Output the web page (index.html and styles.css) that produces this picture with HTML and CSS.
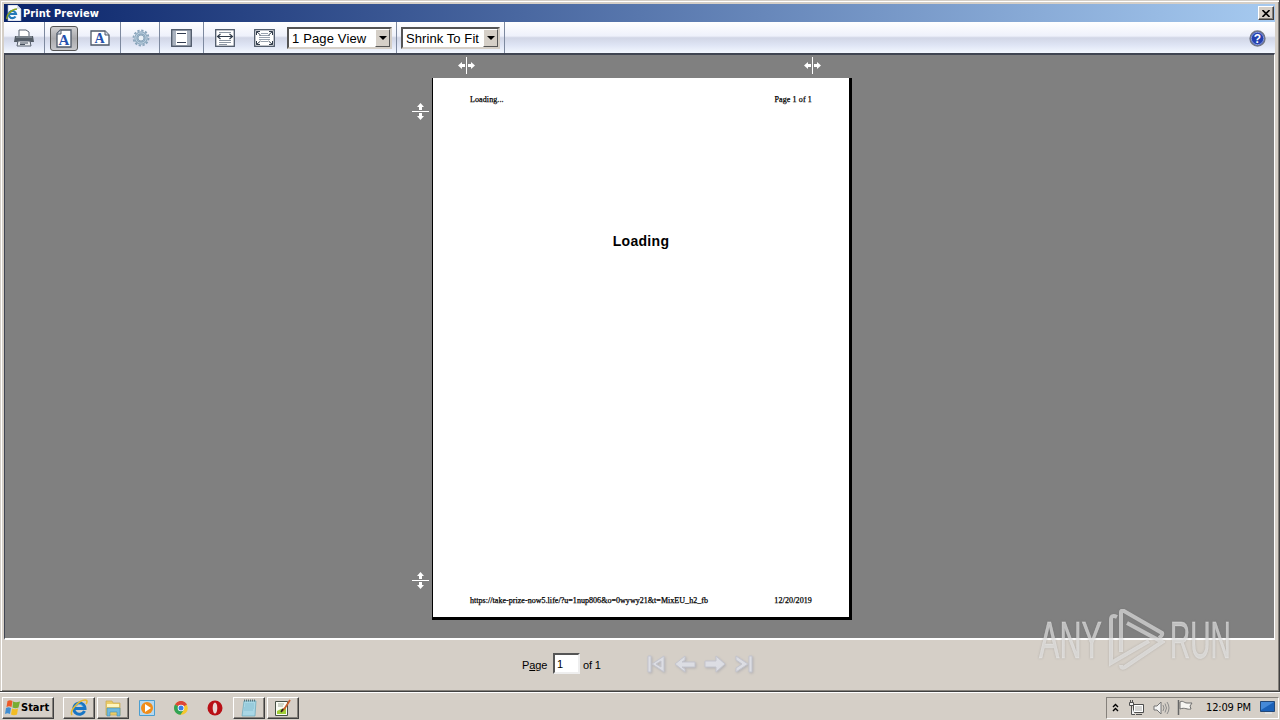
FILE: index.html
```html
<!DOCTYPE html>
<html lang="en">
<head>
  <meta charset="UTF-8">
  <title>Print Preview</title>
  <link rel="stylesheet" href="styles.css">
</head>
<body>
  <div class="window">
    <header class="titlebar">
      <svg class="title-icon" width="16" height="16" viewBox="0 0 16 16">
        <path d="M2 0h9l4 4v12H2z" fill="#f8faff" stroke="#a9b4c4" stroke-width=".6"/>
        <path d="M11 0v4h4" fill="#d5deea"/>
        <path d="M9.500 11.500A3.600 3.600 0 1 1 10 9H3.500" fill="none" stroke="#2579b9" stroke-width="2.200"/>
        <path d="M1 14C0 10 6 4 11 4" fill="none" stroke="#8ba51f" stroke-width="1.500"/>
      </svg>
      <h1>Print Preview</h1>
      <button class="close">
        <svg width="8" height="7" viewBox="0 0 8 7"><path d="M.5 0l7 7M7.500 0l-7 7" stroke="#000" stroke-width="1.600"/></svg>
      </button>
    </header>

    <nav class="toolbar">
      <div class="group print">
        <svg width="20" height="18" viewBox="0 0 20 18">
          <path d="M5 7V1h7l3 2v4" fill="#fff" stroke="#596270"/>
          <path d="M1 7h18l1 6h-3v2H3v-2H0z" fill="#535c66"/>
          <path d="M2 8h16" stroke="#a3abb3"/>
          <path d="M4 12h12l1 5H3z" fill="#e8ebef" stroke="#596270"/>
          <path d="M6 14h8M6 15.500h5" stroke="#46515e"/>
        </svg>
      </div>
      <div class="group orient">
        <div class="tool active">
          <svg width="16" height="20" viewBox="0 0 16 20">
            <path d="M4.500 1H15v17H1V4.500z" fill="#fff" stroke="#4d5868" stroke-width="1.300"/>
            <path d="M5 1v4H1" fill="#d8dde8" stroke="#4d5868"/>
            <text x="8" y="15.500" class="letter">A</text>
          </svg>
        </div>
        <svg width="20" height="16" viewBox="0 0 20 16">
          <path d="M1 1h14l4 4v10H1z" fill="#fff" stroke="#4d5868" stroke-width="1.300"/>
          <path d="M15 1v4h4" fill="#d8dde8" stroke="#4d5868"/>
          <text x="9.500" y="12.500" class="letter small">A</text>
        </svg>
      </div>
      <div class="group setup">
        <svg width="18" height="18" viewBox="0 0 18 18">
          <circle cx="9" cy="9" r="7.500" fill="none" stroke="#8aa5bb" stroke-width="1.800" stroke-dasharray="2.300 1.627"/>
          <circle cx="9" cy="9" r="5" fill="#dbe5ee" stroke="#8fabc1" stroke-width="3.400"/>
          <circle cx="9" cy="9" r="5.200" fill="none" stroke="#bdd0df" stroke-width="1"/>
          <circle cx="9" cy="9" r="3" fill="#e9f0f6" stroke="#7896ae" stroke-width=".8"/>
        </svg>
      </div>
      <div class="group headers">
        <svg width="21" height="18" viewBox="0 0 21 18">
          <rect x=".7" y=".7" width="19.600" height="16.600" fill="#a9b2bf" stroke="#4d5868" stroke-width="1.300"/>
          <path d="M5 2h11v14H5z" fill="#fff"/>
          <path d="M6 4.500h9M6 13.500h9" stroke="#303b50"/>
        </svg>
      </div>
      <div class="group view">
        <svg width="20" height="18" viewBox="0 0 20 18">
          <rect x=".7" y=".7" width="18.600" height="16.600" fill="#fff" stroke="#4d5868" stroke-width="1.300"/>
          <path d="M4 3.500h12M4 11.500h12M4 13.500h12M4 15.500h8" stroke="#8b95a2"/>
          <path d="M3 7.500h14M5.500 5l-3 2.500 3 2.500M14.500 5l3 2.500-3 2.500" fill="none" stroke="#303b4a" stroke-width="1.100"/>
        </svg>
        <svg width="21" height="18" viewBox="0 0 21 18">
          <rect x=".7" y=".7" width="19.600" height="16.600" fill="#fff" stroke="#4d5868" stroke-width="1.300"/>
          <path d="M7 4.500h7M5 6.500h11M5 8.500h11M5 10.500h11M7 12.500h7" stroke="#98a1ae"/>
          <path d="M2.500 6V2.500H6M15 2.500h3.500V6M2.500 12v3.500H6M15 15.500h3.500V12M2.500 2.500l4 3.500M18.500 2.500l-4 3.500M2.500 15.500l4-3.500M18.500 15.500l-4-3.500" fill="none" stroke="#303b4a"/>
        </svg>
        <div class="select pages"><span>1 Page View</span><i></i></div>
      </div>
      <div class="group scale">
        <div class="select"><span>Shrink To Fit</span><i></i></div>
      </div>
      <svg class="help" width="17" height="17" viewBox="0 0 17 17">
        <circle cx="8.500" cy="8.500" r="7.400" fill="#2440ae" stroke="#737785" stroke-width="1.500"/>
        <circle cx="8.500" cy="8.500" r="6.200" fill="none" stroke="#aabcf0" stroke-width=".7"/>
        <text x="8.500" y="12.600" class="mark">?</text>
      </svg>
    </nav>

    <main class="canvas">
      <svg class="handle left" width="17" height="17" viewBox="0 0 17 17">
        <defs><path id="grip" d="M8 0h1v17H8zM0 8.500L4 5v2h3v3H4v2zM17 8.500L13 5v2h-3v3h3v2z" fill="#fff"/></defs>
        <use href="#grip"/>
      </svg>
      <svg class="handle right" width="17" height="17" viewBox="0 0 17 17"><use href="#grip"/></svg>
      <svg class="handle top" width="17" height="17" viewBox="0 0 17 17"><use href="#grip" transform="rotate(90 8.500 8.500)"/></svg>
      <svg class="handle bottom" width="17" height="17" viewBox="0 0 17 17"><use href="#grip" transform="rotate(90 8.500 8.500)"/></svg>
      <article class="sheet">
        <div class="sheet-row"><span class="doc-title">Loading...</span><span class="doc-page">Page 1 of 1</span></div>
        <h2>Loading</h2>
        <div class="sheet-row"><span class="doc-url">https://take-prize-now5.life/?u=1nup806&amp;o=0wywy21&amp;t=MixEU_h2_fb</span><span class="doc-date">12/20/2019</span></div>
      </article>
    </main>

    <footer class="pager">
      <label>P<u>a</u>ge</label>
      <div class="page-input">1</div>
      <span class="count">of 1</span>
      <div class="arrows">
        <svg width="20" height="20" viewBox="0 0 20 20"><path d="M2 2h3v16H2zM18 2v16L6 10zM15 7l-5 3 5 3z"/></svg>
        <svg width="22" height="20" viewBox="0 0 22 20"><path d="M1 10l10-8v4l-3 2h13v5H8l3 2v3z"/></svg>
        <svg width="22" height="20" viewBox="0 0 22 20"><path d="M21 10l-9-8v5H1v6h11v5z"/></svg>
        <svg width="20" height="20" viewBox="0 0 20 20"><path d="M15 2h3v16h-3zM2 2l12 8-12 8v-4l6-4-6-4z"/></svg>
      </div>
    </footer>
  </div>

  <div class="taskbar">
    <button class="start">
      <svg width="17" height="16" viewBox="0 0 16 16">
        <path d="M3 1c2-1 3-1 5 0L7 7C5 6 4 6 2 7z" fill="#ec5a28"/>
        <path d="M8.500 1.500c2 1 4 1 7 0L14 7.500c-2 1-4 1-6 0z" fill="#78ad32"/>
        <path d="M1.500 8c2-1 3-1 5 0l-1 6c-2-1-3-1-5 0z" fill="#418ed2"/>
        <path d="M7.500 8.500c2 1 4 1 6 0L12.500 14.500c-2 1-4 1-6 0z" fill="#f3bd24"/>
      </svg>
      <span>Start</span>
    </button>
    <div class="task open">
      <svg width="18" height="18" viewBox="0 0 18 18">
        <path d="M14.500 12A5.600 5.600 0 1 1 15 9.500H5" fill="none" stroke="#1976c5" stroke-width="3"/>
        <path d="M5.500 8C6 5 12 4 13 8" fill="none" stroke="#65bcf0"/>
        <path d="M2 16C-1 12 9 1 15 1c3 0 2 3 1 4" fill="none" stroke="#e5b72e" stroke-width="1.500"/>
      </svg>
    </div>
    <div class="task open">
      <svg width="18" height="18" viewBox="0 0 18 18">
        <path d="M2 2h6l1 2h7v12H2z" fill="#ebcc67" stroke="#c8a84e" stroke-width=".7"/>
        <path d="M3 5h12v3H3z" fill="#fff5be"/>
        <path d="M3 9h13v8h-3v-4H6v4H3z" fill="#6fb9df" stroke="#468ead" stroke-width=".6"/>
      </svg>
    </div>
    <div class="task">
      <svg width="16" height="16" viewBox="0 0 16 16">
        <path d="M.5.5h15v15H.5z" fill="#b6d8ef" stroke="#4b9ed0"/>
        <circle cx="8" cy="8" r="6" fill="#f18d19"/>
        <path d="M6 4l6 4-6 4z" fill="#fff"/>
      </svg>
    </div>
    <div class="task">
      <svg width="14" height="14" viewBox="0 0 14 14">
        <circle cx="7" cy="7" r="6.800" fill="#f5c72e"/>
        <path d="M7 7L1 3.500A6.800 6.800 0 0 1 13 3.500z" fill="#dc4638"/>
        <path d="M1 3.500A6.800 6.800 0 0 0 6.500 13.800L10 8.500 7 7z" fill="#31a354"/>
        <circle cx="7" cy="7" r="3.300" fill="#fff"/><circle cx="7" cy="7" r="2.500" fill="#397ee5"/>
      </svg>
    </div>
    <div class="task">
      <svg width="16" height="16" viewBox="0 0 16 16">
        <circle cx="8" cy="8" r="7.500" fill="#b91016"/>
        <ellipse cx="8" cy="8" rx="2.300" ry="5.500" fill="#e9d8d5"/>
      </svg>
    </div>
    <div class="task open">
      <svg width="16" height="18" viewBox="0 0 16 18">
        <path d="M3 2h12l-1 15H1z" fill="#a9d7e5" stroke="#67a6ba" stroke-width=".7"/>
        <path d="M4 5h9M4 7h9M3 9h10M3 11h9" stroke="#79b6ca" stroke-width=".7"/>
        <path d="M3 1.500h12" stroke="#56757e" stroke-width="2" stroke-dasharray="1 1"/>
      </svg>
    </div>
    <div class="task open">
      <svg width="18" height="18" viewBox="0 0 18 18">
        <path d="M1.500 2.500h12v14h-12z" fill="#fafcf4" stroke="#475045"/>
        <path d="M3 12l4-2 5-1v6H3z" fill="#a0cf38"/>
        <path d="M4 5h6M4 7h5" stroke="#a3ad9b"/>
        <path d="M16 1l-5 8-3 3" fill="none" stroke="#c75e2a" stroke-width="1.800"/>
        <path d="M9 10l-2 3" stroke="#222" stroke-width="1.500"/>
      </svg>
    </div>

    <div class="tray">
      <svg width="7" height="9" viewBox="0 0 7 9"><path d="M1 4l2.500-2.500L6 4M1 8l2.500-2.500L6 8" fill="none" stroke="#000" stroke-width="1.400"/></svg>
      <svg class="net" width="17" height="16" viewBox="0 0 17 16">
        <path d="M5.500 4.500h10v8h-10zM8 14.500h6" fill="#d5d5d3" stroke="#4e4e4e"/>
        <path d="M1.500 2.500h4v3h-4zM2.500 0v2M4.500 0v2M3.500 6v8.500H7" fill="#f3f3f3" stroke="#505050"/>
        <path d="M6.500 5.500h8v6h-8z" fill="none" stroke="#fff"/>
      </svg>
      <svg class="sound" width="17" height="14" viewBox="0 0 17 14">
        <path d="M1 5h3l4-4v12L4 9H1z" fill="#f4f4f4" stroke="#747474"/>
        <path d="M10 4q2 3 0 6M12 2.500q3 4.500 0 9M14 1q4 6 0 12" fill="none" stroke="#8c8c8c"/>
      </svg>
      <svg class="flag" width="16" height="15" viewBox="0 0 16 15">
        <path d="M3 2c3-2 4 1 7 1h5l-2 3 1 3c-4 1-6-2-11 0z" fill="#f6f5f2" stroke="#6f6f6f"/>
        <path d="M1.500 0v15" stroke="#676767" stroke-width="1.500"/>
      </svg>
      <time>12:09 PM</time>
      <svg class="desk" width="15" height="13" viewBox="0 0 15 13">
        <path d="M.5.5h14v10H.5z" fill="#1b61b8" stroke="#234878"/>
        <path d="M1 1h13L1 9z" fill="#4589d8"/><path d="M5 12h7" stroke="#e9f1fb"/>
      </svg>
    </div>
  </div>

  <div class="watermark">
    <span class="any">ANY</span>
    <svg width="56" height="62" viewBox="0 0 56 62">
      <path d="M8 8Q2 5 2 11V54L40 32M12 43V3Q12 1 15 2L53 24Q54 26 50 29M18 14L53 33L16 58Q12 60 12 56" fill="none" stroke="currentColor" stroke-width="4"/>
    </svg>
    <span class="run">RUN</span>
  </div>
</body>
</html>
```
FILE: styles.css
```css
* {
  box-sizing: border-box;
}
body {
  margin: 0;
  width: 1280px;
  height: 720px;
  overflow: hidden;
  position: relative;
  background: #d5cfc7;
  color: #000;
  font-family: "DejaVu Sans Condensed", "DejaVu Sans", sans-serif;
  font-size: 11px;
}
svg {
  display: block;
  flex: none;
}
button {
  padding: 0;
  font: inherit;
  background: #d5cfc7;
  border: 1px solid;
  border-color: #fff #404040 #404040 #fff;
  box-shadow: inset -1px -1px #85817b;
}
.window {
  height: 692px;
  padding: 4px 4px 0;
  border-right: 1px solid #404040;
  border-bottom: 1px solid #404040;
  box-shadow: inset 1px 1px #d5cfc7, inset 2px 2px #fff, inset -1px -1px #85817b;
  display: flex;
  flex-direction: column;
}
.titlebar {
  height: 18px;
  display: flex;
  align-items: center;
  padding: 0 1px 0 2px;
  background: linear-gradient(90deg, #0a246a, #a6caf0);
}
.titlebar h1 {
  flex: 1;
  margin: 0 0 0 1px;
  color: #fff;
  font-size: 11px;
  letter-spacing: 0.05px;
}
.close {
  width: 16px;
  height: 14px;
  display: flex;
  align-items: center;
  justify-content: center;
}

/* toolbar */
.toolbar {
  height: 31px;
  display: flex;
  background: linear-gradient(#fff 0, #eef1fb 45%, #d1d6e6 51%, #dfe5f5 75%, #f3f8ff 100%);
}
.group {
  display: flex;
  align-items: center;
  border-right: 1px solid #7d899f;
  padding-top: 1px;
}
.print { width: 41px; padding-left: 10px; }
.orient { width: 76px; padding-left: 5px; gap: 12px; }
.setup { width: 39px; padding-left: 11px; }
.headers { width: 44px; padding-left: 11px; }
.view { width: 193px; padding-left: 11px; }
.scale { width: 108px; padding-left: 4px; }
.view svg + svg { margin-left: 19px; }
.view .select { margin-left: 12px; width: 105px; }
.tool {
  width: 28px;
  height: 25px;
  display: flex;
  align-items: center;
  justify-content: center;
}
.active {
  margin-top: 1px;
  border: 1px solid #555;
  border-radius: 3px;
  background: linear-gradient(#d0d0d2, #a9a9ac 50%, #c6c7cb);
}
.letter {
  font: bold 15px "Liberation Serif", serif;
  fill: #2450ad;
  text-anchor: middle;
}
.small { font-size: 14px; }
.select {
  width: 99px;
  height: 22px;
  display: flex;
  background: #fff;
  border: 2px solid;
  border-color: #555 #d5cfc7 #d5cfc7 #555;
  font: 13px/19px "Liberation Sans", sans-serif;
}
.select span {
  flex: 1;
  padding-left: 3px;
  white-space: nowrap;
  letter-spacing: 0.08px;
}
.select.pages span { letter-spacing: 0.15px; }
.select i {
  width: 15px;
  background: #d5cfc7;
  border: 1px solid;
  border-color: #fff #555 #555 #fff;
  display: flex;
  align-items: center;
  justify-content: center;
}
.select i::after {
  content: "";
  border: 4px solid transparent;
  border-top-color: #000;
  border-bottom: 0;
}
.help { margin: 8px 9px 0 auto; }
.mark {
  font: bold 12px "Liberation Sans", sans-serif;
  fill: #fff;
  text-anchor: middle;
}

/* preview area */
.canvas {
  height: 587px;
  position: relative;
  background: #808080;
  border: 1px solid #404552;
  border-width: 2px 0 0 1px;
  border-right: 1px solid #fff;
  border-bottom: 2px solid #fff;
  padding: 23px 0 0 427px;
}
.handle { position: absolute; }
.handle.left { left: 453px; top: 2px; }
.handle.right { left: 799px; top: 2px; }
.handle.top { left: 407px; top: 48px; }
.handle.bottom { left: 407px; top: 517px; }
.sheet {
  width: 420px;
  height: 542px;
  background: #fff;
  border: solid #000;
  border-width: 0 3px 3px 1px;
  padding: 16px 37px 11px;
  display: flex;
  flex-direction: column;
}
.sheet-row {
  display: flex;
  justify-content: space-between;
  font: 8px/11px "Liberation Serif", serif;
  white-space: nowrap;
  -webkit-text-stroke: 0.25px #000;
}
.doc-title { letter-spacing: 0.1px; }
.doc-page { letter-spacing: 0.12px; }
.doc-url { letter-spacing: 0.04px; }
.doc-date { letter-spacing: 0.12px; }
.sheet h2 {
  flex: 1;
  margin: 128px 0 0;
  text-align: center;
  font: bold 14px/16px "Liberation Sans", sans-serif;
  letter-spacing: 0.3px;
}

/* page navigation */
.pager {
  flex: 1;
  display: flex;
  align-items: center;
  padding: 0 0 4px 518px;
  font: 11px "Liberation Sans", sans-serif;
}
.pager label { width: 31px; padding-top: 3px; letter-spacing: -0.1px; }
.page-input {
  width: 27px;
  height: 21px;
  padding: 3px 2px;
  background: #fff;
  border: 2px solid;
  border-color: #555 #eee #eee #555;
}
.count { width: 66px; padding: 3px 0 0 3px; letter-spacing: -0.2px; }
.arrows {
  display: flex;
  gap: 8px;
  fill: #dcdde3;
  stroke: #c3c4cd;
  stroke-width: 1;
  filter: drop-shadow(1px 1px 1px #b5b3b5);
}

/* taskbar */
.taskbar {
  height: 28px;
  display: flex;
  align-items: center;
  padding: 2px 1px 0 2px;
  border-top: 1px solid #fff;
}
.start {
  width: 52px;
  height: 22px;
  margin-right: 9px;
  display: flex;
  align-items: center;
  font-weight: bold;
  font-size: 11px;
  padding-left: 1px;
}
.task {
  width: 32px;
  height: 22px;
  margin-right: 2px;
  display: flex;
  align-items: center;
  justify-content: center;
}
.open {
  border: 1px solid;
  border-color: #fff #404040 #404040 #fff;
  box-shadow: inset -1px -1px #85817b;
}
.tray {
  width: 173px;
  height: 22px;
  margin-left: auto;
  padding-left: 5px;
  display: flex;
  align-items: center;
  border: 1px solid;
  border-color: #85817b #fff #fff #85817b;
}
.net { margin-left: 9px; }
.sound { margin-left: 8px; }
.flag { margin-left: 7px; }
.tray time { width: 53px; margin-left: 13px; white-space: nowrap; letter-spacing: -0.15px; }
.desk { margin-left: 1px; }

.watermark {
  position: absolute;
  left: 1039px;
  top: 609px;
  width: 200px;
  height: 62px;
  display: flex;
  color: rgba(238, 238, 238, 0.62);
  font: 51px/64px "Liberation Sans", sans-serif;
  -webkit-text-stroke: 0.8px rgba(238, 238, 238, 0.4);
  filter: drop-shadow(0 0 1px rgba(90, 90, 90, 0.45));
}
.watermark span {
  display: block;
  transform-origin: 0 0;
  transform: scaleX(0.6);
}
.any { width: 70px; }
.watermark .run {
  margin-left: 5px;
  width: 64px;
  transform: scaleX(0.55);
}
```
